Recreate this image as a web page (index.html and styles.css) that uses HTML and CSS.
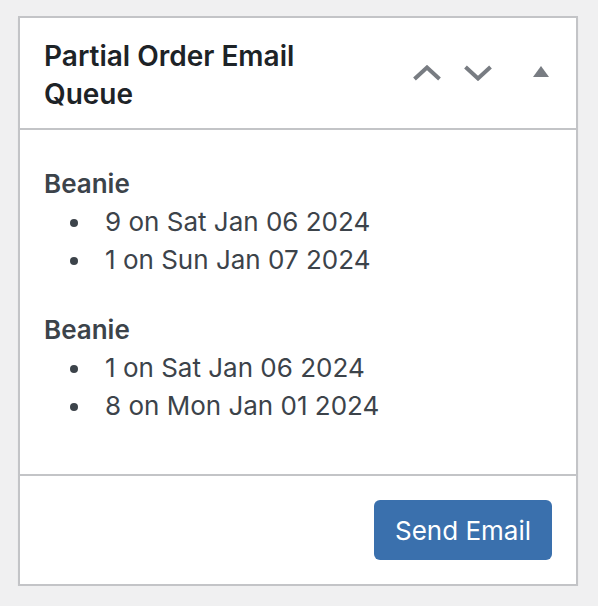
FILE: index.html
```html
<!DOCTYPE html>
<html>
<head>
<meta charset="utf-8">
<link rel="stylesheet" href="styles.css">
</head>
<body>
<div class="postbox">
  <div class="postbox-header">
    <h2 class="title">Partial Order Email Queue</h2>
    <div class="handles">
      <button class="handle up" aria-label="Move up">
        <svg width="28" height="16" viewBox="0 0 28 16"><polyline points="1.5,14 14,2.5 26.5,14" fill="none" stroke="#787c82" stroke-width="4"/></svg>
      </button>
      <button class="handle down" aria-label="Move down">
        <svg width="28" height="16" viewBox="0 0 28 16"><polyline points="1.5,2 14,13.5 26.5,2" fill="none" stroke="#787c82" stroke-width="4"/></svg>
      </button>
      <button class="handle toggle" aria-label="Toggle panel">
        <svg width="16" height="12" viewBox="0 0 16 12"><polygon points="8,0 16,11 0,11" fill="#787c82"/></svg>
      </button>
    </div>
  </div>
  <div class="inside">
    <div class="group">
      <strong class="product">Beanie</strong>
      <ul class="dates">
        <li>9 on Sat Jan 06 2024</li>
        <li>1 on Sun Jan 07 2024</li>
      </ul>
    </div>
    <div class="group">
      <strong class="product">Beanie</strong>
      <ul class="dates">
        <li>1 on Sat Jan 06 2024</li>
        <li>8 on Mon Jan 01 2024</li>
      </ul>
    </div>
  </div>
  <div class="footer">
    <button class="send">Send Email</button>
  </div>
</div>
</body>
</html>
```
FILE: styles.css
```css
html, body {
  margin: 0;
  padding: 0;
  background: #f0f0f1;
}
body {
  padding: 16px 20px 0 18px;
  font-family: Inter, "Noto Sans", "Liberation Sans", sans-serif;
  color: #3c434a;
}
.postbox {
  background: #fff;
  border: 2px solid #c3c4c7;
  box-shadow: 0 2px 2px rgba(0,0,0,0.04);
}
.postbox-header {
  display: flex;
  align-items: center;
  border-bottom: 2px solid #c3c4c7;
  padding: 18px 27px 14px 24px;
  min-height: 78px;
}
.title {
  flex: 1;
  margin: 0;
  font-size: 28px;
  line-height: 38px;
  font-weight: 600;
  color: #1d2327;
  max-width: 280px;
}
.handles {
  display: flex;
  align-items: center;
  margin-left: auto;
  margin-top: -4px;
}
.handle {
  border: 0;
  background: none;
  padding: 0;
  margin: 0;
  height: 30px;
  display: flex;
  align-items: center;
  justify-content: center;
}
.handle.down {
  margin-left: 23px;
}
.handle.toggle {
  margin-left: 41px;
  margin-top: -2px;
}
.inside {
  padding: 35px 24px 49px 24px;
  display: flex;
  flex-direction: column;
  gap: 32px;
}
.product {
  display: block;
  font-size: 26px;
  line-height: 38px;
  font-weight: 600;
}
.dates {
  margin: 0;
  padding: 0 0 0 26px;
  list-style: none;
}
.dates li {
  font-size: 26px;
  line-height: 38px;
}
.dates li::before {
  content: "";
  display: inline-block;
  width: 8px;
  height: 8px;
  border-radius: 50%;
  background: #3c434a;
  vertical-align: middle;
  margin: -2px 27px 0 0;
}
.footer {
  border-top: 2px solid #c3c4c7;
  padding: 24px;
  display: flex;
  justify-content: flex-end;
}
.send {
  background: #3a70ad;
  color: #fff;
  border: 0;
  border-radius: 6px;
  font-family: inherit;
  font-size: 26px;
  height: 60px;
  width: 178px;
  padding: 0;
}
```
